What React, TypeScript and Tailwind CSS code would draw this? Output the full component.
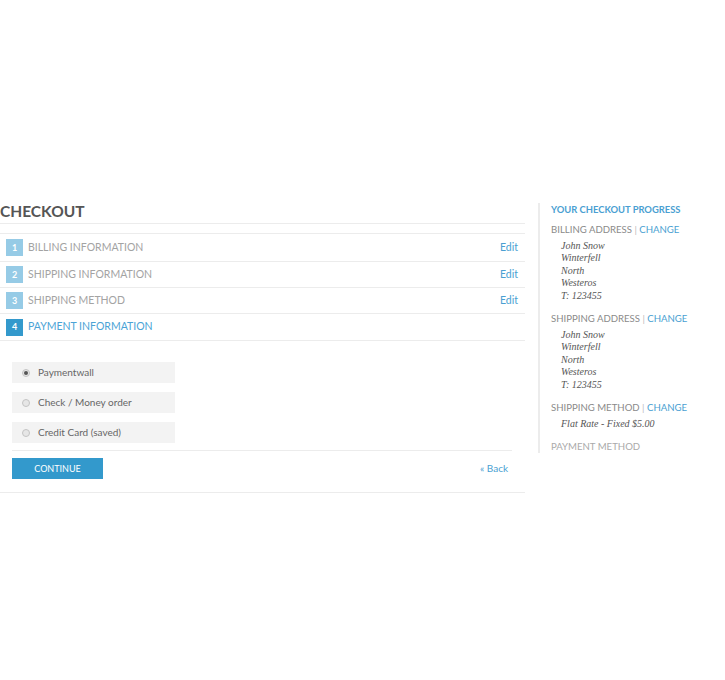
import React from "react";

const sans = { fontFamily: "Lato, 'Open Sans', sans-serif" };

function StepRow({ n, label, active, edit, h }: { n: number; label: string; active?: boolean; edit?: boolean; h: string }) {
  return (
    <div className={`flex ${h} items-center border-b border-[#ececec] pl-[6px] pr-[7px]`}>
      <div
        className={`flex h-[17px] w-[17px] items-center justify-center text-[9px] font-bold text-white ${active ? "bg-[#3399cc]" : "bg-[#96cbe6]"}`}
      >
        {n}
      </div>
      <div className={`ml-[5px] text-[10.5px] ${active ? "text-[#4aa3d6]" : "text-[#a3a3a3]"}`}>{label}</div>
      {edit && <div className="ml-auto text-[10.5px] text-[#4a9fd2]">Edit</div>}
    </div>
  );
}

function PayOption({ label, checked }: { label: string; checked?: boolean }) {
  return (
    <div className="flex h-[21px] w-[163px] items-center bg-[#f3f3f3] pl-[10px]">
      <div className="flex h-[8px] w-[8px] items-center justify-center rounded-full border border-[#c4c4c4] bg-[#e6e6e6]">
        {checked && <div className="h-[4px] w-[4px] rounded-full bg-[#555]" />}
      </div>
      <div className="ml-[8px] text-[10px] text-[#666]">{label}</div>
    </div>
  );
}

function Addr({ lines }: { lines: string[] }) {
  return (
    <div
      className="mt-[4px] pl-[10px] text-[10px] italic leading-[12.4px] text-[#555]"
      style={{ fontFamily: "'Liberation Serif', 'DejaVu Serif', serif" }}
    >
      {lines.map((l) => (
        <div key={l}>{l}</div>
      ))}
    </div>
  );
}

function SecHead({ label, change }: { label: string; change?: boolean }) {
  return (
    <div className="text-[9.6px] leading-[12px] text-[#8a8a8a]">
      {label}
      {change && (
        <>
          <span className="text-[#bbb]"> | </span>
          <span className="text-[#4a9fd2]">CHANGE</span>
        </>
      )}
    </div>
  );
}

export default function App() {
  return (
    <div className="min-h-[680px] w-[725px] bg-white" style={sans}>
      <div className="flex pt-[203px]">
        <div className="w-[525px]">
          <div className="border-b border-[#ececec] pb-[3px] text-[15.5px] font-bold leading-[17px] text-[#555]">CHECKOUT</div>
          <div className="mt-[9px] border-t border-[#ececec]">
            <StepRow n={1} label="BILLING INFORMATION" edit h="h-[28px]" />
            <StepRow n={2} label="SHIPPING INFORMATION" edit h="h-[26px]" />
            <StepRow n={3} label="SHIPPING METHOD" edit h="h-[26px]" />
            <StepRow n={4} label="PAYMENT INFORMATION" active h="h-[27px]" />
          </div>
          <div className="border-b border-[#ececec] pb-[13px]">
            <div className="ml-[12px] mt-[21px] flex flex-col gap-[9px]">
              <PayOption label="Paymentwall" checked />
              <PayOption label="Check / Money order" />
              <PayOption label="Credit Card (saved)" />
            </div>
            <div className="ml-[12px] mr-[13px] mt-[7px] flex items-center border-t border-[#ececec] pr-[4px] pt-[7px]">
              <div className="flex h-[21px] w-[91px] items-center justify-center bg-[#3399cc] text-[9px] text-white">CONTINUE</div>
              <div className="ml-auto text-[10px] text-[#4a9fd2]">« Back</div>
            </div>
          </div>
        </div>
        <div className="ml-[13px] h-[250px] border-l-2 border-[#ececec] pl-[11px] pt-[1px]">
          <div className="text-[9.4px] font-bold leading-[12px] text-[#4a9fd2]">YOUR CHECKOUT PROGRESS</div>
          <div className="mt-[8px]">
            <SecHead label="BILLING ADDRESS" change />
            <Addr lines={["John Snow", "Winterfell", "North", "Westeros", "T: 123455"]} />
          </div>
          <div className="mt-[11px]">
            <SecHead label="SHIPPING ADDRESS" change />
            <Addr lines={["John Snow", "Winterfell", "North", "Westeros", "T: 123455"]} />
          </div>
          <div className="mt-[11px]">
            <SecHead label="SHIPPING METHOD" change />
            <Addr lines={["Flat Rate - Fixed $5.00"]} />
          </div>
          <div className="mt-[11px] text-[9.6px] leading-[12px] text-[#aaa]">PAYMENT METHOD</div>
        </div>
      </div>
    </div>
  );
}
